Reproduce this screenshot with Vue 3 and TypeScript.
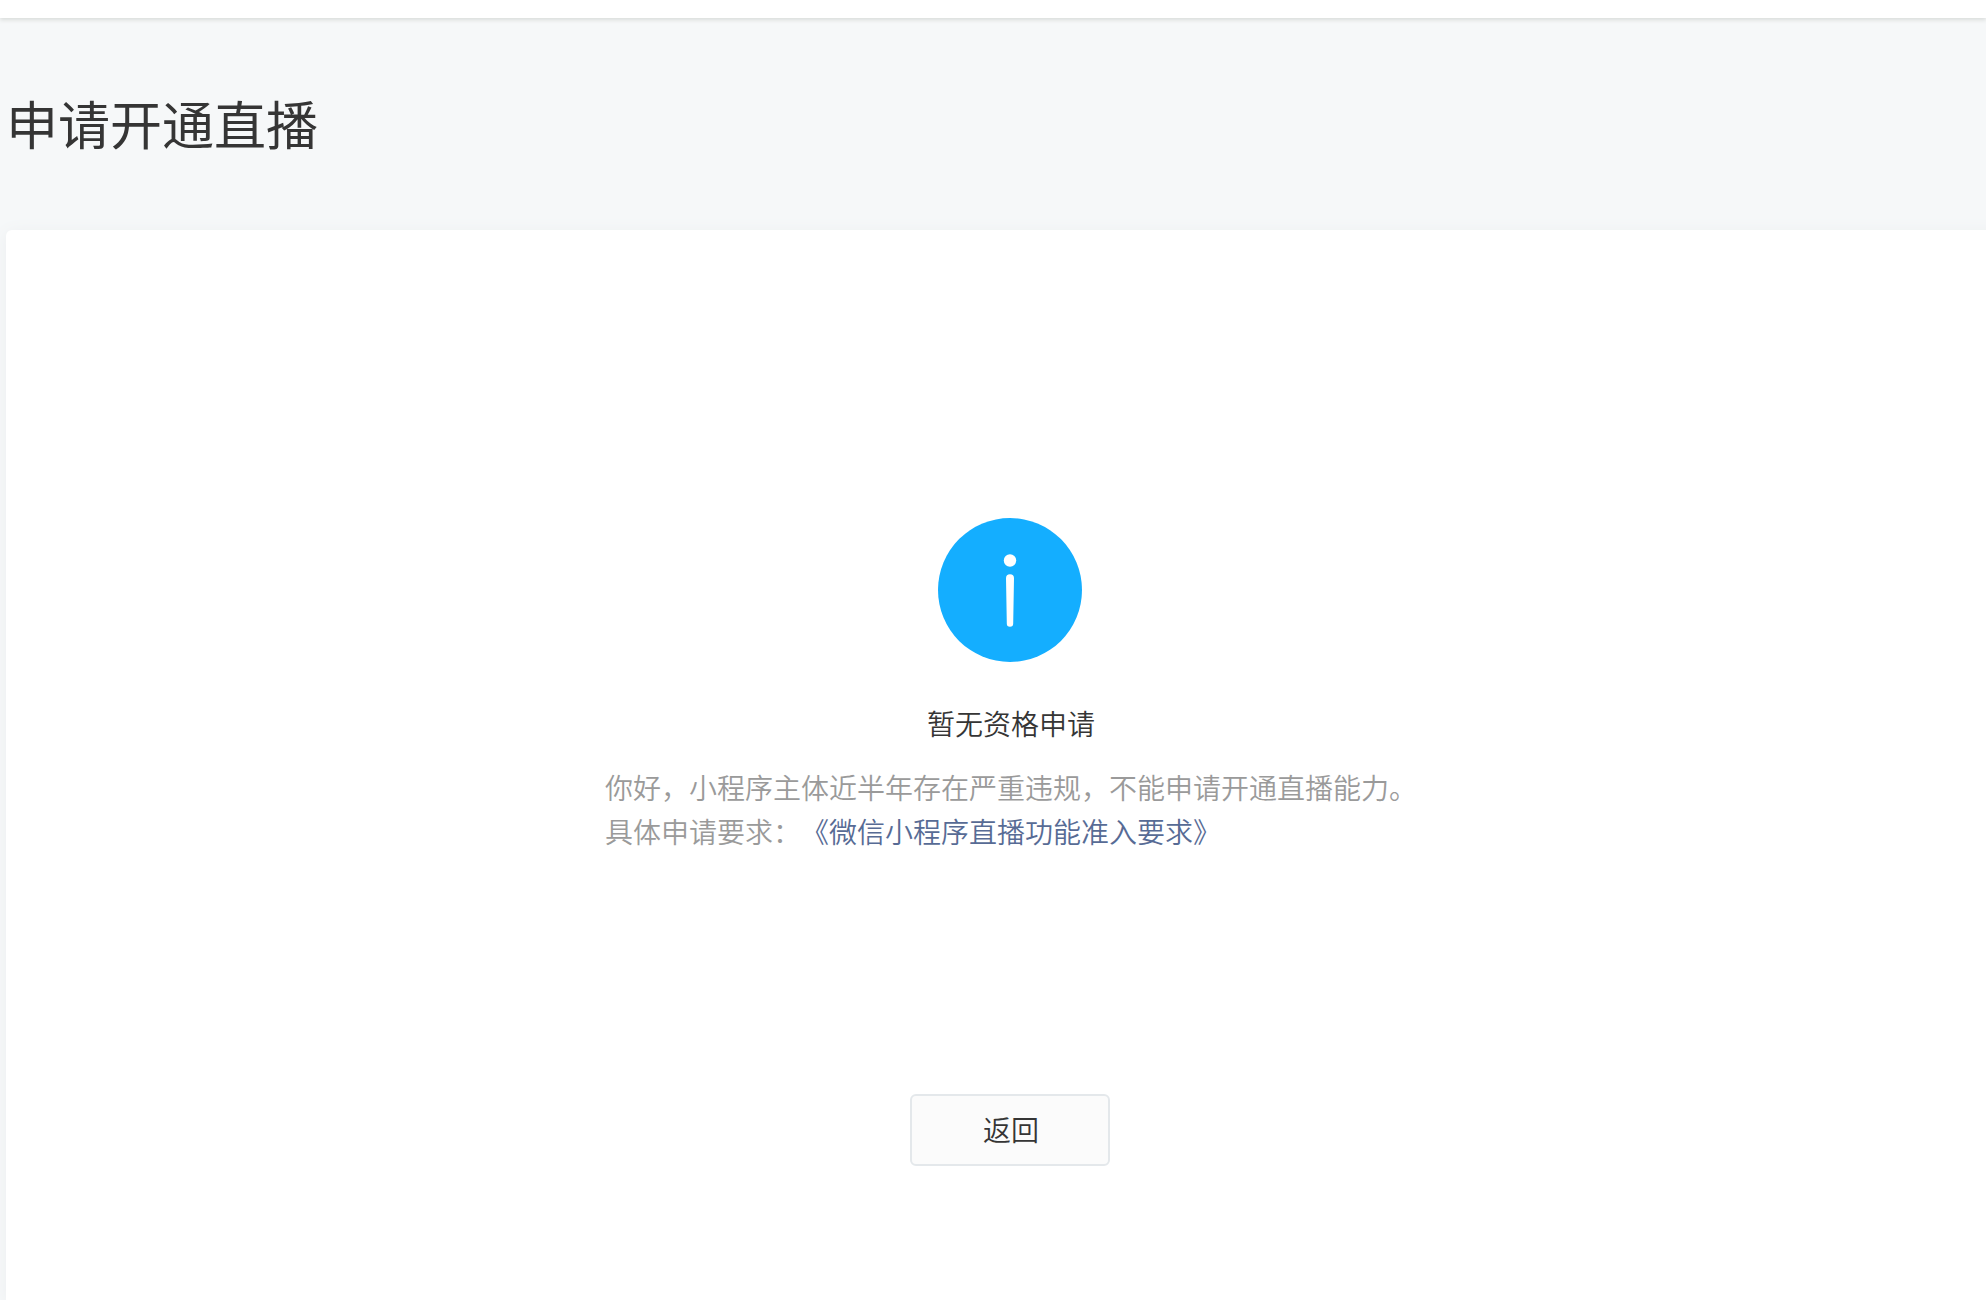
<script setup lang="ts">
import { ref } from 'vue'

interface Result {
  title: string
  message: string
  label: string
  link: string
}

const heading = ref<string>('申请开通直播')
const result: Result = {
  title: '暂无资格申请',
  message: '你好，小程序主体近半年存在严重违规，不能申请开通直播能力。',
  label: '具体申请要求：',
  link: '《微信小程序直播功能准入要求》',
}

function goBack(): void {
  window.history.back()
}
</script>

<template>
  <div class="page">
    <header class="topbar"></header>
    <h1 class="heading">{{ heading }}</h1>
    <main class="panel">
      <svg class="icon" viewBox="0 0 144 144" aria-hidden="true">
        <circle cx="72" cy="72" r="72" fill="#14aeff" />
        <circle cx="72" cy="42.5" r="6.2" fill="#fff" />
        <path
          d="M68 60.2a4 4 0 0 1 8 0L75.2 105.6a3.2 3.2 0 0 1-6.4 0z"
          fill="#fff"
        />
      </svg>
      <h2 class="title">{{ result.title }}</h2>
      <div class="desc">
        <p>{{ result.message }}</p>
        <p>{{ result.label }}<a href="#requirements">{{ result.link }}</a></p>
      </div>
      <button type="button" class="back" @click="goBack">返回</button>
    </main>
  </div>
</template>

<style>
body {
  margin: 0;
  background: #f6f8f9;
}
</style>

<style scoped>
.page {
  display: flex;
  flex-direction: column;
  min-height: 100vh;
  overflow: hidden;
  background: #f6f8f9;
  color: #353535;
  font-family: 'Noto Sans CJK SC', sans-serif;
  font-size: 28px;
  font-weight: 350;
  line-height: 44px;
  text-spacing-trim: space-all;
}

.topbar {
  height: 18px;
  background: #fff;
  box-shadow: 0 2px 4px #d9dcda;
}

.heading {
  margin: 65px 6px 67px;
  font-size: 52px;
  font-weight: 400;
  line-height: 80px;
}

/* The panel runs past the right edge of the window. */
.panel {
  display: flex;
  flex: 1;
  flex-direction: column;
  align-items: center;
  box-sizing: border-box;
  margin: 0 -28px 0 6px;
  padding: 288px 20px 134px;
  border-radius: 6px 6px 0 0;
  background: #fff;
  box-shadow: 0 2px 16px #eceef0;
}

.icon {
  width: 144px;
  height: 144px;
}

.title {
  margin: 39px 0 20px;
  padding-left: 2px;
  font-size: 28px;
  font-weight: 350;
}

.desc {
  padding-left: 2px;
  color: #9a9a9a;
}

.desc p {
  margin: 0;
}

.desc a {
  color: #576b95;
  text-decoration: none;
}

.back {
  box-sizing: border-box;
  width: 200px;
  height: 72px;
  margin-top: 241px;
  padding: 0 0 2px 2px;
  border: 2px solid #e4e8eb;
  border-radius: 6px;
  background: #fbfbfb;
  color: #353535;
  font: inherit;
  cursor: pointer;
}
</style>
